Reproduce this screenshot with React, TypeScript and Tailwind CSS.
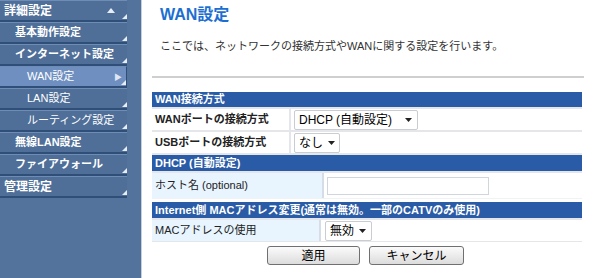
import React from "react";

const font = { fontFamily: '"Liberation Sans", "Noto Sans CJK JP", sans-serif' };

function Corner() {
  return (
    <svg className="absolute right-0 bottom-[1px]" width="5" height="5" viewBox="0 0 5 5">
      <polygon points="5,0 5,5 0,5" fill="#e8eef6" />
    </svg>
  );
}

function NavItem({ label, level, active }: { label: string; level: 0 | 1 | 2; active?: boolean }) {
  const pad = level === 0 ? "pl-[4px] font-bold text-[12px]" : level === 1 ? "pl-[15px] font-bold text-[11px]" : "pl-[27px] text-[11px]";
  return (
    <div
      className={`relative h-[22px] w-[127px] flex items-center whitespace-nowrap border-t border-t-[#6f8cb4] border-b-2 border-b-[#2f4f78] text-white ${pad} ${
        active ? "bg-[#6f8fc0] border-r border-r-[#2f4f78]" : "bg-[#4f6f99]"
      }`}
    >
      <span>{label}</span>
      {active && <span className="absolute right-[4px] top-[5px] text-[8px] text-[#dfe7f3]">▶</span>}
      {label === "詳細設定" && (
        <svg className="absolute right-[12px] top-[7px]" width="8" height="5" viewBox="0 0 8 5">
          <polygon points="4,0 8,5 0,5" fill="#e8eef6" />
        </svg>
      )}
      <Corner />
    </div>
  );
}

function Select({ value, w }: { value: string; w: string }) {
  return (
    <div className={`h-[20px] ${w} shrink-0 whitespace-nowrap bg-white border border-[#c9ccd0] rounded-[2px] flex items-center justify-between gap-[5px] pl-[4px] pr-[5px] text-[12px] text-black`}>
      <span>{value}</span>
      <svg width="7" height="4" viewBox="0 0 7 4" className="shrink-0">
        <polygon points="0,0 7,0 3.5,4" fill="#222" />
      </svg>
    </div>
  );
}

export default function App() {
  return (
    <div className="w-[600px] h-[278px] flex bg-white overflow-hidden" style={font}>
      <div className="w-[142px] h-full bg-[#54739c] border-r border-r-[#c5d0de] flex flex-col shrink-0">
        <NavItem label="詳細設定" level={0} />
        <NavItem label="基本動作設定" level={1} />
        <NavItem label="インターネット設定" level={1} />
        <NavItem label="WAN設定" level={2} active />
        <NavItem label="LAN設定" level={2} />
        <NavItem label="ルーティング設定" level={2} />
        <NavItem label="無線LAN設定" level={1} />
        <NavItem label="ファイアウォール" level={1} />
        <NavItem label="管理設定" level={0} />
      </div>
      <div className="flex-1 pl-[10px] pr-[16px]">
        <div className="pl-[8px] pt-[5px] text-[16px] font-bold text-[#1c6fd1] leading-[20px]">WAN設定</div>
        <div className="pl-[8px] mt-[14px] text-[11px] text-[#333] leading-[14px] whitespace-nowrap">
          ここでは、ネットワークの接続方式やWANに関する設定を行います。
        </div>
        <div className="mt-[23px] h-[2px] bg-[#cfcfcf] w-[432px]" />
        <div className="mt-[14px] w-[430px] text-[11px] whitespace-nowrap">
          <div className="h-[15px] bg-[#2a5ba6] text-white font-bold pl-[3px] flex items-center">WAN接続方式</div>
          <div className="flex h-[25px] border-t-2 border-t-[#e4e6ea] border-b-2 border-b-[#e4e6ea]">
            <div className="w-[139px] pl-[3px] flex items-center font-bold text-[#222] border-r-2 border-r-[#e4e6ea]">WANポートの接続方式</div>
            <div className="flex items-center pl-[3px]"><Select value="DHCP (自動設定)" w="w-[124px]" /></div>
          </div>
          <div className="flex h-[23px] border-b-2 border-b-[#e4e6ea]">
            <div className="w-[139px] pl-[3px] flex items-center font-bold text-[#222] border-r-2 border-r-[#e4e6ea]">USBポートの接続方式</div>
            <div className="flex items-center pl-[3px]"><Select value="なし" w="w-[46px]" /></div>
          </div>
          <div className="h-[16px] bg-[#2a5ba6] text-white font-bold pl-[3px] flex items-center">DHCP (自動設定)</div>
          <div className="flex h-[28px] border-t-2 border-t-[#e4e6ea] border-b border-b-[#f0f2f4]">
            <div className="w-[172px] pl-[3px] flex items-center text-[#222] bg-[#e8f5ff] border-r-2 border-r-[#d7dde6]">ホスト名 (optional)</div>
            <div className="flex items-center pl-[3px]">
              <div className="h-[18px] w-[162px] border border-[#cfd6de] bg-white" />
            </div>
          </div>
          <div className="mt-[3px] h-[16px] bg-[#2a5ba6] text-white font-bold pl-[3px] flex items-center">Internet側 MACアドレス変更(通常は無効。一部のCATVのみ使用)</div>
          <div className="flex h-[24px] border-t-2 border-t-[#e4e6ea] border-b border-b-[#e4e6ea]">
            <div className="w-[169px] pl-[3px] flex items-center text-[#222] bg-[#e8f5ff] border-r-2 border-r-[#d7dde6]">MACアドレスの使用</div>
            <div className="flex items-center pl-[4px]"><Select value="無効" w="w-[47px]" /></div>
          </div>
          <div className="flex gap-[9px] mt-[4px] pl-[115px]">
            <button className="w-[93px] h-[19px] border border-[#707070] rounded-[3px] bg-gradient-to-b from-[#fbfbfb] to-[#dcdcdc] text-[12px] text-black leading-none">適用</button>
            <button className="w-[95px] h-[19px] border border-[#707070] rounded-[3px] bg-gradient-to-b from-[#fbfbfb] to-[#dcdcdc] text-[12px] text-black leading-none">キャンセル</button>
          </div>
        </div>
      </div>
    </div>
  );
}
